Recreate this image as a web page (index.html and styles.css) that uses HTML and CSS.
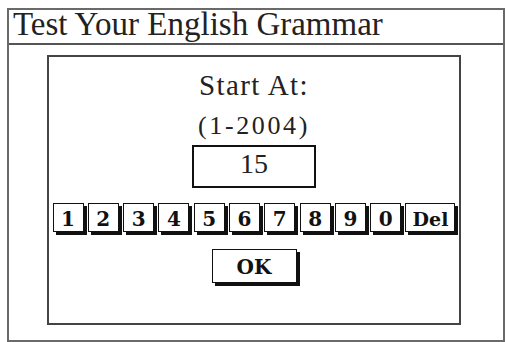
FILE: index.html
```html
<!DOCTYPE html>
<html>
<head>
<meta charset="utf-8">
<link rel="stylesheet" href="styles.css">
</head>
<body>
<div class="frame">
  <div class="title">Test Your English Grammar</div>
  <div class="content">
    <div class="dialog">
      <div class="label">Start At:</div>
      <div class="range">(1-2004)</div>
      <div class="field">15</div>
      <div class="keys">
        <div class="key">1</div>
        <div class="key">2</div>
        <div class="key">3</div>
        <div class="key">4</div>
        <div class="key">5</div>
        <div class="key">6</div>
        <div class="key">7</div>
        <div class="key">8</div>
        <div class="key">9</div>
        <div class="key">0</div>
        <div class="key del">Del</div>
      </div>
      <div class="ok">OK</div>
    </div>
  </div>
</div>
</body>
</html>
```

FILE: styles.css
```css
html, body {
  margin: 0;
  background: #fff;
}
body {
  padding: 8px 1px 0 7px;
  width: 506px;
  height: 342px;
  box-sizing: border-box;
  overflow: hidden;
  color: #222;
  font-family: "Liberation Serif", serif;
}
.frame {
  width: 498px;
  height: 334px;
  box-sizing: border-box;
  border: 2px solid #6a6a6a;
}
.title {
  height: 35px;
  box-sizing: border-box;
  border-bottom: 2px solid #555;
  font-size: 33px;
  line-height: 28px;
  padding: 0 0 7px 4px;
  white-space: nowrap;
}
.content {
  padding: 10px 0 0 38px;
}
.dialog {
  width: 414px;
  height: 270px;
  box-sizing: border-box;
  border: 2px solid #444;
  display: flex;
  flex-direction: column;
  align-items: center;
  padding-top: 12px;
}
.label {
  font-size: 29px;
  line-height: 32px;
  letter-spacing: 1.4px;
}
.range {
  margin-top: 11px;
  font-size: 26px;
  line-height: 28px;
  letter-spacing: 2.6px;
}
.field {
  margin-top: 5px;
  width: 124px;
  height: 43px;
  box-sizing: border-box;
  border: 2px solid #111;
  text-align: center;
  font-size: 28px;
  line-height: 33px;
  padding-bottom: 6px;
}
.keys {
  margin-top: 15px;
  display: flex;
  gap: 4.3px;
}
.key, .ok {
  box-sizing: border-box;
  border: 1.5px solid #111;
  box-shadow: 3px 3px 0 #111;
  background: #fff;
  display: flex;
  align-items: center;
  justify-content: center;
  font-family: "DejaVu Serif", serif;
  font-weight: bold;
  color: #111;
}
.key {
  width: 31px;
  height: 29px;
  font-size: 20px;
  padding-top: 2px;
}
.key.del {
  width: 50px;
  font-size: 19px;
}
.ok {
  margin-top: 17px;
  width: 85px;
  height: 34px;
  font-size: 20px;
  padding-top: 1px;
}
```
